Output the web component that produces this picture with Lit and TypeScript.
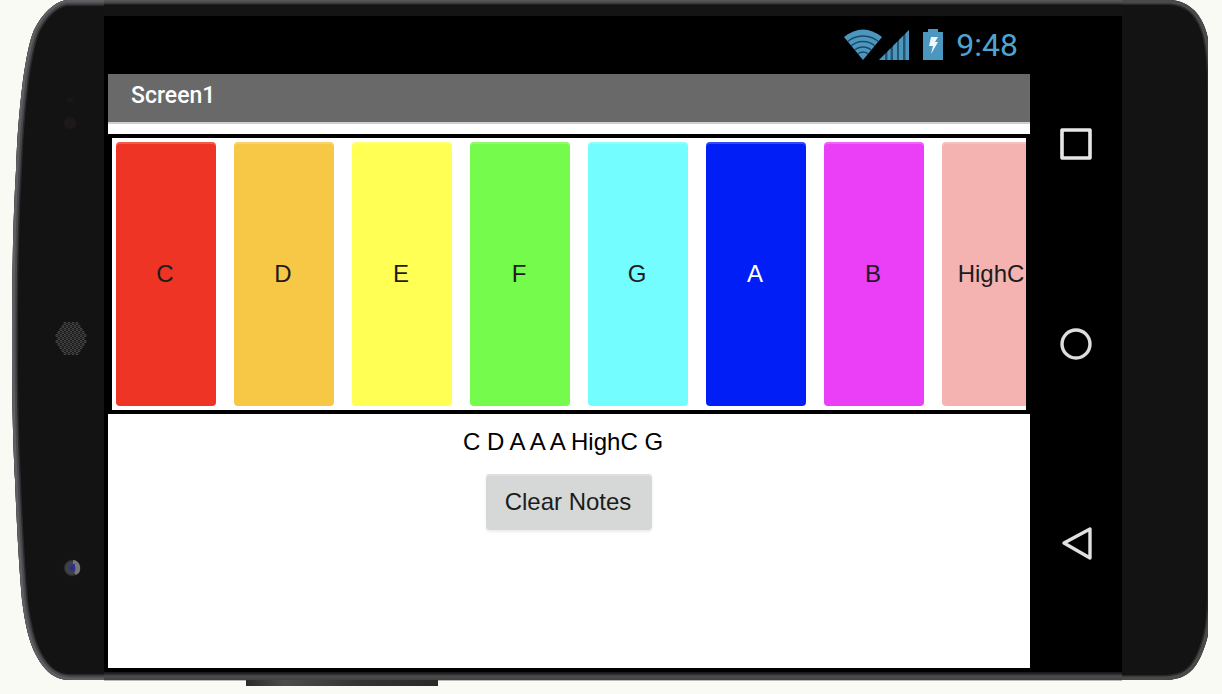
import { LitElement, html, css, svg } from "lit";
import { customElement, state } from "lit/decorators.js";
import { classMap } from "lit/directives/class-map.js";

interface Note {
  name: string;
  tone: string;
}

const NOTES: Note[] = [
  { name: "C", tone: "red" },
  { name: "D", tone: "orange" },
  { name: "E", tone: "yellow" },
  { name: "F", tone: "green" },
  { name: "G", tone: "cyan" },
  { name: "A", tone: "blue" },
  { name: "B", tone: "magenta" },
  { name: "HighC", tone: "pink" },
];

// Outer contour of the left end of the phone body, open towards the screen.
const LEFT_EDGE =
  "M118 0 H66 C54 2 42 14 34 30 C29 42 26 60 23 80 C19 112 17 140 16 170 C13 220 12 280 12 340 C12 400 13 440 15 480 C17 530 19 565 22 600 C25 624 29 642 36 655 C44 670 54 680 70 680 H118";
const RIGHT_EDGE =
  "M-14 0 H48 C66 1 77 12 83 28 C88 42 90 60 90 90 V590 C90 620 87 638 79 656 C71 673 62 679 44 680 H-14";

const grilleDots: { x: number; y: number }[] = [];
for (let row = 0; row < 11; row++) {
  for (let col = 0; col < 8; col++) {
    const x = 57 + col * 4 + (row % 2) * 2;
    const y = 323.5 + row * 3;
    if (Math.hypot((x - 71) / 14.5, (y - 338.5) / 16.5) <= 1) grilleDots.push({ x, y });
  }
}

@customElement("app-root")
export class AppRoot extends LitElement {
  @state() private played = ["C", "D", "A", "A", "A", "HighC", "G"];

  static styles = css`
    :host {
      display: block;
      font-family: "Liberation Sans", Arial, sans-serif;
      font-size: 24px;
      line-height: 28px;
      background: #f9faf4;
    }
    * {
      box-sizing: border-box;
    }
    button {
      font: inherit;
      border: 0;
      padding: 0;
      cursor: pointer;
    }
    .phone {
      display: grid;
      grid-template-columns: 104px minmax(0, 1fr) 86px;
      min-height: 100vh;
      padding-right: 14px;
    }
    .cap {
      display: block;
      width: 100%;
      height: 100%;
    }
    .middle {
      display: grid;
      grid-template-rows: 16px 1fr 22px;
    }
    .rim-top {
      background: linear-gradient(#5b5b5c 0, #454546 3px, #141414 5px, #141414);
    }
    .rim-bottom {
      height: 9px;
      background: linear-gradient(#151515 0, #262627 2px, #4d4c4f 4px, #414043 8px, #a5a5a3 8px, #c8c8c4 9px);
    }
    .side-key {
      width: 192px;
      height: 6px;
      margin: -1px 0 0 142px;
      background: linear-gradient(90deg, #2b2b2c, #4c4c4d 20%, #333334 60%, #29292a);
    }
    .face {
      display: grid;
      grid-template-columns: minmax(0, 1fr) 92px;
      background: #000;
    }
    .screen {
      display: flex;
      flex-direction: column;
      padding: 0 0 4px 4px;
    }
    .status {
      display: flex;
      justify-content: flex-end;
      align-items: center;
      height: 58px;
      padding-right: 12px;
      color: #4fa3d1;
      font-family: Roboto, sans-serif;
      font-size: 32px;
    }
    .status svg {
      display: block;
      margin-right: 12px;
    }
    .title {
      margin: 0;
      height: 50px;
      padding: 8px 23px;
      background: #696969;
      border-bottom: 2px solid #cfcfcf;
      color: #fff;
      font-family: Roboto, sans-serif;
      font-size: 23px;
      font-weight: 500;
    }
    .content {
      flex: 1;
      display: flex;
      flex-direction: column;
      align-items: center;
      padding-top: 10px;
      background: #fff;
    }
    .keys {
      display: flex;
      gap: 18px;
      align-self: stretch;
      height: 280px;
      padding: 4px;
      border: 4px solid #000;
      overflow: hidden;
    }
    .key {
      flex: none;
      width: 100px;
      padding-right: 2px;
      border-radius: 4px;
      box-shadow: inset 0 2px rgba(255, 255, 255, 0.2);
      color: #1c1c1c;
      text-align: center;
    }
    .red { background: #ee3424; }
    .orange { background: #f7c846; }
    .yellow { background: #ffff54; }
    .green { background: #75fb4c; }
    .cyan { background: #73fdff; }
    .blue { background: #001ef5; color: #fff; }
    .magenta { background: #ea3ef7; }
    .pink { background: #f4b3b1; }
    .played {
      display: block;
      min-height: 28px;
      margin: 14px 0 18px;
      padding-right: 12px;
      color: #000;
    }
    .clear {
      height: 56px;
      padding: 0 21px 0 19px;
      border-radius: 4px;
      background: #d6d8d7;
      box-shadow: inset 0 2px #dedfdf, 0 2px 3px rgba(0, 0, 0, 0.08);
      color: #1c1c1c;
    }
    .nav {
      display: flex;
      flex-direction: column;
      align-items: center;
      justify-content: space-between;
      padding: 110px 0;
    }
    .nav-button {
      width: 36px;
      height: 36px;
      background: none;
    }
    .nav-button svg {
      display: block;
    }
  `;

  private leftCap() {
    return html`<svg class="cap" viewBox="0 0 104 694" preserveAspectRatio="none" aria-hidden="true">
      <defs>
        <clipPath id="left-body"><path d=${LEFT_EDGE} /></clipPath>
        <radialGradient id="lens">
          <stop offset="0" stop-color="#292960" /><stop offset=".4" stop-color="#3b3b58" />
          <stop offset=".7" stop-color="#444" /><stop offset="1" stop-color="#1b1b1b" />
        </radialGradient>
      </defs>
      <g clip-path="url(#left-body)">
        <path d=${LEFT_EDGE} fill="#131313" stroke="#2a2a2b" stroke-width="12" />
        <path d=${LEFT_EDGE} fill="none" stroke="#48494c" stroke-width="9" />
        <path d=${LEFT_EDGE} fill="none" stroke="#5e5f62" stroke-width="5" />
      </g>
      <circle cx="70" cy="100" r="3" fill="#1b1718" />
      <circle cx="70" cy="123" r="6" fill="#1d191a" />
      ${grilleDots.map((d) => svg`<circle cx=${d.x} cy=${d.y} r="1.2" fill="#222" stroke="#505050" stroke-width=".8" />`)}
      <circle cx="72" cy="568" r="8.5" fill="url(#lens)" />
      <path d="M73 560 A8 8 0 0 1 76 575 L74 572 A5 5 0 0 0 73 564Z" fill="#777" />
      <path d="M69 567 L74 565 V572" fill="none" stroke="#30309a" stroke-width="2" />
    </svg>`;
  }

  private rightCap() {
    return html`<svg class="cap" viewBox="0 0 86 694" preserveAspectRatio="none" aria-hidden="true">
      <defs><clipPath id="right-body"><path d=${RIGHT_EDGE} /></clipPath></defs>
      <g clip-path="url(#right-body)">
        <path d=${RIGHT_EDGE} fill="#131313" stroke="#29292a" stroke-width="10" />
        <path d=${RIGHT_EDGE} fill="none" stroke="#4a4a4b" stroke-width="7" />
      </g>
    </svg>`;
  }

  private statusIcons() {
    return html`<svg width="100" height="34" viewBox="0 0 100 34" aria-hidden="true">
      <defs><clipPath id="fan"><path d="M0 9 Q19 -6 38 9 L19 32Z" /></clipPath></defs>
      <g clip-path="url(#fan)">
        <rect width="40" height="34" fill="#4c97c0" />
        <g fill="none" stroke="#1d4a63" stroke-width="1.500">
          <circle cx="19" cy="32" r="8" /><circle cx="19" cy="32" r="13" />
          <circle cx="19" cy="32" r="18.500" /><circle cx="19" cy="32" r="24" />
        </g>
      </g>
      <path d="M35 32 L65 2 V32Z" fill="#265572" />
      <path d="M35 32 L41 26 V32Z M43.500 23.500 L46.500 20.500 V32 H43.500Z M49 18 L53 14 V32 H49Z M55 12 L59 8 V32 H55Z M61.500 5.500 L65 2 V32 H61.500Z" fill="#4c97c0" />
      <path d="M79 4 H84 V1 H94 V4 H99 V32 H79Z" fill="#4c97c0" />
      <path d="M87 9 H94 L91 14 H94 L87 26 L89 18 H85Z" fill="#eef7fc" />
    </svg>`;
  }

  render() {
    return html`<div class="phone">
      ${this.leftCap()}
      <div class="middle">
        <div class="rim-top"></div>
        <div class="face">
          <main class="screen">
            <div class="status">${this.statusIcons()}<span>9:48</span></div>
            <h1 class="title">Screen1</h1>
            <div class="content">
              <div class="keys">
                ${NOTES.map(
                  (n) => html`<button
                    class=${classMap({ key: true, [n.tone]: true })}
                    @click=${() => (this.played = [...this.played, n.name])}
                  >${n.name}</button>`
                )}
              </div>
              <output class="played">${this.played.join(" ")}</output>
              <button class="clear" @click=${() => (this.played = [])}>Clear Notes</button>
            </div>
          </main>
          <nav class="nav">
            <button class="nav-button" aria-label="Recent apps">
              <svg width="36" height="36" fill="none" stroke="#e6e6e6" stroke-width="3.6" stroke-linejoin="round"><rect x="4" y="4" width="28" height="28" /></svg>
            </button>
            <button class="nav-button" aria-label="Home">
              <svg width="36" height="36" fill="none" stroke="#dedede" stroke-width="3.4"><circle cx="18" cy="18" r="14" /></svg>
            </button>
            <button class="nav-button" aria-label="Back">
              <svg width="36" height="36" fill="none" stroke="#e0e0e0" stroke-width="3.4" stroke-linejoin="round"><path d="M32 3 V32 L6 17Z" /></svg>
            </button>
          </nav>
        </div>
        <div>
          <div class="rim-bottom"></div>
          <div class="side-key"></div>
        </div>
      </div>
      ${this.rightCap()}
    </div>`;
  }
}
